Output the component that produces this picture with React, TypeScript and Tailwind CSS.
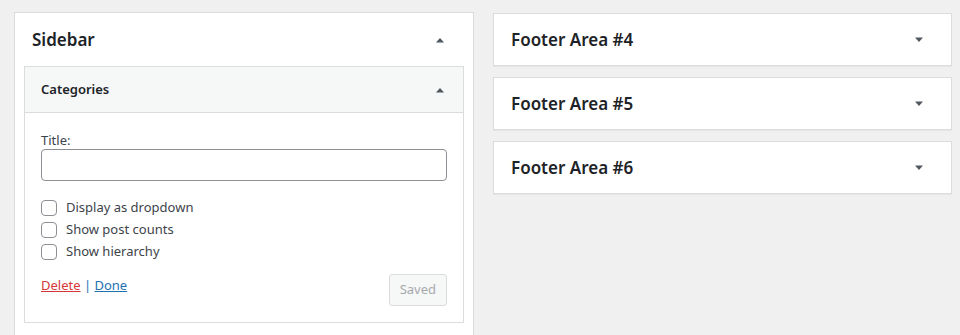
import React from "react";

const Up = () => (
  <svg width="10" height="6" viewBox="0 0 10 6" className="block">
    <path d="M1 5.5 L5 1 L9 5.5 Z" fill="#50575e" />
  </svg>
);
const Down = () => (
  <svg width="10" height="6" viewBox="0 0 10 6" className="block">
    <path d="M1 0.5 L5 5 L9 0.5 Z" fill="#50575e" />
  </svg>
);

const Check = ({ label }: { label: string }) => (
  <label className="flex items-center h-[22px] gap-[9px] text-[13px] text-[#3c434a]">
    <span className="w-[16px] h-[16px] rounded-[4px] border border-[#8c8f94] bg-white shrink-0" />
    <span>{label}</span>
  </label>
);

const FooterBox = ({ title }: { title: string }) => (
  <div className="h-[53px] bg-white border border-[#dcdcde] shadow-[0_1px_1px_rgba(0,0,0,0.04)] flex items-center justify-between pl-[17px] pr-[27px]">
    <h2 className="text-[17px] font-semibold text-[#1d2327]">{title}</h2>
    <Down />
  </div>
);

export default function App() {
  return (
    <div
      className="w-[960px] h-[335px] overflow-hidden bg-[#f0f0f1] flex gap-[19px] pl-[14px] pr-[8px] pt-[12px]"
      style={{ fontFamily: '"Noto Sans", "Open Sans", sans-serif' }}
    >
      <div className="w-[460px] shrink-0 bg-white border border-[#dcdcde] self-start">
        <div className="h-[53px] flex items-center justify-between pl-[17px] pr-[28px]">
          <h2 className="text-[17px] font-semibold text-[#1d2327]">Sidebar</h2>
          <Up />
        </div>
        <div className="mx-[9px] border border-[#dcdcde]">
          <div className="h-[46px] bg-[#f6f7f7] border-b border-[#dcdcde] flex items-center justify-between pl-[16px] pr-[18px]">
            <h3 className="text-[13px] font-semibold text-[#1d2327]">Categories</h3>
            <Up />
          </div>
          <div className="px-[16px] pt-[18px] pb-[16px]">
            <div className="text-[13px] text-[#3c434a] leading-[18px]">Title:</div>
            <input
              type="text"
              className="w-full h-[32px] rounded-[4px] border border-[#8c8f94] bg-white outline-none"
            />
            <div className="mt-[16px] flex flex-col">
              <Check label="Display as dropdown" />
              <Check label="Show post counts" />
              <Check label="Show hierarchy" />
            </div>
            <div className="mt-[10px] flex justify-between items-start">
              <div className="text-[13px] pt-[3px]">
                <a className="text-[#d63638] underline" href="#">Delete</a>
                <span className="text-[#2271b1]"> | </span>
                <a className="text-[#2271b1] underline" href="#">Done</a>
              </div>
              <button className="h-[32px] px-[10px] rounded-[3px] border border-[#dcdcde] bg-[#f6f7f7] text-[#a7aaad] text-[13px] mt-[1px]">
                Saved
              </button>
            </div>
          </div>
        </div>
        <div className="mx-[9px] mt-[12px] h-[40px] border border-[#dcdcde]" />
      </div>
      <div className="w-[460px] mt-[1px] flex flex-col gap-[11px]">
        <FooterBox title="Footer Area #4" />
        <FooterBox title="Footer Area #5" />
        <FooterBox title="Footer Area #6" />
      </div>
    </div>
  );
}
